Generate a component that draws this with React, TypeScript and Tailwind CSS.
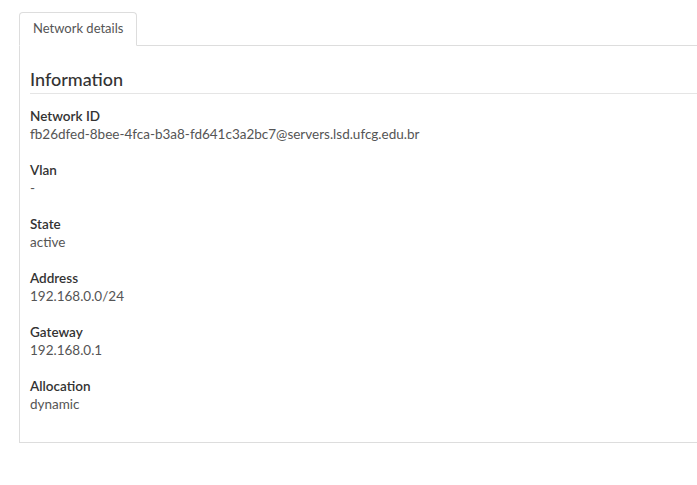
import React from 'react';

const fields: { label: string; value: string }[] = [
    { label: 'Network ID', value: 'fb26dfed-8bee-4fca-b3a8-fd641c3a2bc7@servers.lsd.ufcg.edu.br' },
    { label: 'Vlan', value: '-' },
    { label: 'State', value: 'active' },
    { label: 'Address', value: '192.168.0.0/24' },
    { label: 'Gateway', value: '192.168.0.1' },
    { label: 'Allocation', value: 'dynamic' },
];

export default function App() {
    return (
        <div className="w-[697px] h-[485px] overflow-hidden bg-white font-['Lato',sans-serif] text-[#333]">
            <div className="pl-[19px] pt-[12px] w-[720px]">
                {/* tabs */}
                <div className="flex border-b border-[#ddd]">
                    <div className="-mb-px h-[34px] px-[13px] flex items-center border border-[#ddd] border-b-white rounded-t-[4px] bg-white text-[13px] text-[#555]">
                        Network details
                    </div>
                </div>

                {/* tab content */}
                <div className="border-l border-b border-[#ddd] px-[10px] pt-[21px] pb-[11px]">
                    <h3 className="text-[18px] leading-[24px] pb-[2px] font-medium text-[#333] border-b border-[#e5e5e5] mb-[13px]">
                        Information
                    </h3>
                    {fields.map((f) => (
                        <div key={f.label} className="mb-[18px] text-[13.5px] leading-[18px]">
                            <div className="font-semibold text-[#333]">{f.label}</div>
                            <div className="text-[#555]">{f.value}</div>
                        </div>
                    ))}
                </div>
            </div>
        </div>
    );
}
